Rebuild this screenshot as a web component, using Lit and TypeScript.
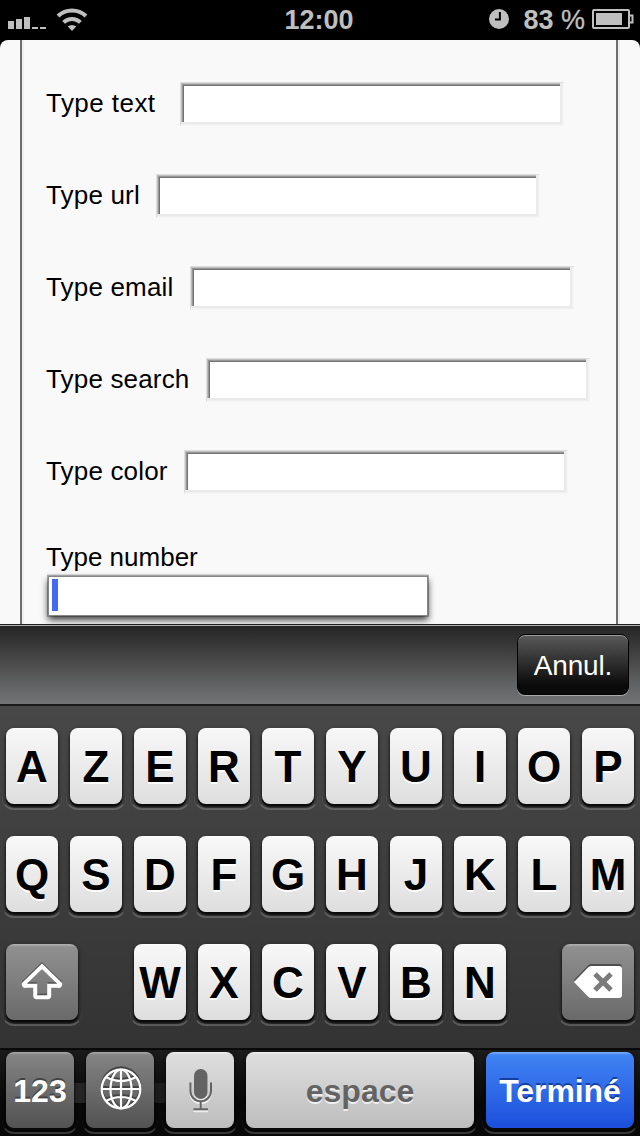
import { LitElement, html, css, svg } from "lit";
import { customElement, property } from "lit/decorators.js";

@customElement("status-bar")
class StatusBar extends LitElement {
  static styles = css`
    :host { display: grid; grid-template-columns: 1fr auto 1fr; align-items: center; height: 40px; background: #000; color: #bfbfbf; font: bold 27px/40px "Liberation Sans", sans-serif; }
    .left, .right { display: flex; align-items: center; height: 40px; }
    .time { padding-right: 2px; }
    .right { justify-content: flex-end; }
    svg { display: block; fill: currentColor; }
    .clock { margin-right: 14px; margin-bottom: 2px; }
    .pct { white-space: pre; margin-right: 7px; }
    .thin { font-weight: normal; -webkit-text-stroke: .3px currentColor; }
    .bat { margin-right: 6px; margin-bottom: 2px; }
  `;
  render() {
    return html`
      <div class="left">
        <svg width="100" height="40" viewBox="0 0 100 40">
          <path d="M8 21h6v8H8zM16 19h6v10h-6zM24 17h6v12h-6zM32 27h6v2h-6zM40 27h6v2h-6z"/>
          <path d="M72 31l-4.200-4.400a6.200 6.200 0 0 1 8.400 0z"/>
          <g fill="none" stroke="currentColor" stroke-width="4"><path d="M63.600 22.400a12.200 12.200 0 0 1 16.800 0"/><path d="M58 16a20.400 20.400 0 0 1 28 0"/></g>
        </svg>
      </div>
      <div class="time">12:00</div>
      <div class="right">
        <svg class="clock" width="20" height="20" viewBox="0 0 20 20"><circle cx="10" cy="10" r="10"/><path d="M10.900 3v7.500H6" fill="none" stroke="#000" stroke-width="2"/></svg>
        <div class="pct">83 <span class="thin">%</span></div>
        <svg class="bat" width="42" height="20" viewBox="0 0 42 20"><rect x="1" y="1" width="36" height="18" rx="1" fill="none" stroke="currentColor" stroke-width="2"/><path d="M4 4h26v12H4z"/><path d="M37 6.500h3.500v7H37" fill="none" stroke="currentColor" stroke-width="2"/></svg>
      </div>`;
  }
}

@customElement("web-form")
class WebForm extends LitElement {
  static styles = css`
    :host { display: block; height: 584px; background: #000; overflow: hidden; font: 26px/30px "Liberation Sans", sans-serif; color: #000; }
    .page { box-sizing: border-box; height: 584px; padding: 0 20px; background: #f9f9f9; border-radius: 8px 8px 0 0; }
    .col { box-sizing: border-box; width: 598px; height: 584px; border: solid #6e6e6e; border-width: 0 2px; box-shadow: inset 2px 0 #f0f0f0, 2px 0 #eee; padding: 42px 0 0 24px; display: flex; flex-direction: column; gap: 48px; }
    .row { display: flex; align-items: center; height: 44px; white-space: nowrap; letter-spacing: .17px; }
    .row:first-child { letter-spacing: .45px; }
    .label { padding-bottom: 2px; }
    .field { box-sizing: border-box; width: 384px; height: 44px; background: #fff; border: 1px solid; border-color: #dedede #f5f5f5 #f5f5f5 #dedede; box-shadow: inset -1px -1px #f1f1f1, inset -3px -3px #e9eaea, inset 1px 1px #bebebe, inset 2px 2px #989898, inset 3px 3px #737373; }
    .number { display: flex; flex-direction: column; }
    .focused { box-sizing: border-box; width: 380px; height: 40px; margin: 4px 0 0 2px; background: #fff; border: 1px solid #858585; box-shadow: 0 0 0 1px rgba(0,0,0,.22), 0 -1px 0 1px rgba(0,0,0,.1), 0 4px 7px rgba(0,0,0,.75); padding: 2px 3px; }
    .caret { width: 6px; height: 32px; background: #426bf2; }
  `;
  private fields = [["Type text", 180], ["Type url", 156], ["Type email", 190], ["Type search", 206], ["Type color", 184]] as const;
  render() {
    return html`<div class="page"><div class="col">
      ${this.fields.map(([label, x]) => html`<div class="row"><div class="label" style="width:${x - 46}px">${label}</div><div class="field"></div></div>`)}
      <div class="number"><div>Type number</div><div class="focused"><div class="caret"></div></div></div>
    </div></div>`;
  }
}

@customElement("key-cap")
class KeyCap extends LitElement {
  @property() kind = "letter";
  @property({ type: Number }) w = 52;
  static styles = css`
    :host { display: block; }
    .key { box-sizing: border-box; position: relative; height: 76px; border-radius: 8px; display: flex; align-items: center; justify-content: center; font: bold 44px/50px "Liberation Sans", sans-serif; padding-top: 2px; box-shadow: 0 2px 1px #0a0a0a, 0 3px 3px rgba(0,0,0,.75), 0 1px 4px 1px rgba(0,0,0,.2); }
    .key::after { content: ""; position: absolute; left: -4px; right: -4px; bottom: -6px; height: 12px; border-bottom: 2px solid rgba(255,255,255,.2); border-left: 1px solid rgba(255,255,255,.04); border-right: 1px solid rgba(255,255,255,.04); border-radius: 0 0 12px 12px; }
    .letter { color: #000; background: linear-gradient(rgba(255,255,255,.9), transparent 2px), linear-gradient(#f8f8f8, #dedede); text-shadow: 0 2px 0 #fff; }
    .dark { color: #fff; font-size: 32px; background: linear-gradient(rgba(255,255,255,.3), transparent 3px), linear-gradient(#919191, #6a6a6a); }
    .low { color: #fff; font-size: 32px; background: linear-gradient(rgba(255,255,255,.3), transparent 3px), linear-gradient(#858585, #525252); text-shadow: 0 -2px 0 #444; }
    .light { color: #636363; font-size: 32px; background: linear-gradient(rgba(255,255,255,.8), transparent 2px), linear-gradient(#dfdfdf, #bdbdbd); text-shadow: 0 2px 0 #eee; }
    .blue { color: #fff; font-size: 32px; letter-spacing: -.1px; background: linear-gradient(rgba(255,255,255,.35), transparent 3px), linear-gradient(#4185f4, #1c4fdc); text-shadow: 0 -2px 0 #153f9c; }
  `;
  render() {
    return html`<div class="key ${this.kind}" style="width:${this.w}px"><slot></slot></div>`;
  }
}

const arrow = "M22 3.200L39.400 20.200a1.400 1.400 0 0 1-1 2.600H29.200v10a1.400 1.400 0 0 1-1.400 1.400H16.600a1.400 1.400 0 0 1-1.400-1.400V22.800H5.600a1.400 1.400 0 0 1-1-2.600z";
const erase = "M0 16L14 1.500Q15.500 0 17 0H45a3 3 0 0 1 3 3V29a3 3 0 0 1-3 3H17Q15.500 32 14 30.500z";
const globe = svg`<circle cx="21" cy="21" r="19.300"/><ellipse cx="21" cy="21" rx="10.500" ry="19.300"/><path d="M21 1.700v38.600M1.700 21h38.600M6 9q15 8 30 0M6 33q15-8 30 0"/>`;
const mic = svg`<rect x="5" y="0" width="13.500" height="30" rx="6.700" stroke="none"/><path d="M1.400 13.500v8.500a10.300 10.300 0 0 0 20.600 0v-8.500M11.700 32.500v7M4.500 40.300h14.500" fill="none"/>`;

@customElement("soft-keyboard")
class SoftKeyboard extends LitElement {
  static styles = css`
    :host { display: block; }
    .tools { box-sizing: border-box; height: 82px; border-top: 1px solid #1c1d1e; border-bottom: 2px solid #191a1b; background: linear-gradient(#b5b5b5 1px, #252525 1px, #4c4c4c 50%, #606162 74%, #727476); display: flex; justify-content: flex-end; padding: 9px 11px 0 0; }
    .cancel { box-sizing: border-box; width: 112px; height: 61px; border: 1px solid #000; border-radius: 8px; background: linear-gradient(#5a5a5a, #303030 45%, #0a0a0a 85%); box-shadow: inset 0 1px 0 #999, 0 1px 0 #aaa; color: #fff; font: 28px/62px "Liberation Sans", sans-serif; letter-spacing: -.15px; text-align: center; }
    .keys { box-sizing: border-box; height: 342px; padding: 22px 6px 0; background: linear-gradient(#484848, #333); display: flex; flex-direction: column; gap: 32px; }
    .row { display: flex; gap: 12px; }
    .row.split { justify-content: space-between; }
    .group { display: flex; gap: 12px; }
    .bottom { box-sizing: border-box; height: 88px; padding: 2px 6px 0; border-top: 2px solid #0a0a0a; background: linear-gradient(#1b1b1b, #080808 60%); display: flex; gap: 12px; position: relative; }
    .bottom::before { content: ""; position: absolute; left: 74px; top: 33px; width: 92px; height: 20px; background: linear-gradient(90deg, #262626, #1c1c1c); }
    svg { display: block; fill: none; stroke: #fff; overflow: visible; margin-bottom: 2px; }
    .globe { margin-bottom: 4px; margin-left: 1px; }
    .mic { margin-left: 1px; }
  `;
  private letters(s: string) {
    return [...s].map((c) => html`<key-cap>${c}</key-cap>`);
  }
  render() {
    return html`
      <div class="tools"><div class="cancel">Annul.</div></div>
      <div class="keys">
        <div class="row">${this.letters("AZERTYUIOP")}</div>
        <div class="row">${this.letters("QSDFGHJKLM")}</div>
        <div class="row split">
          <key-cap kind="dark" .w=${72}><svg width="44" height="38" viewBox="0 0 44 38"><path d=${arrow} transform="translate(0 -2)" stroke="#505050" stroke-width="3"/><path d=${arrow} stroke-width="4"/></svg></key-cap>
          <div class="group">${this.letters("WXCVBN")}</div>
          <key-cap kind="dark" .w=${72}><svg width="48" height="32" viewBox="0 0 48 32"><path d=${erase} fill="#4e4e4e" transform="translate(0 -2)" stroke="none"/><path d=${erase} fill="#fff" stroke="none"/><path d="M21 8l16 16M37 8L21 24" stroke="#7b7b7b" stroke-width="5"/></svg></key-cap>
        </div>
      </div>
      <div class="bottom">
        <key-cap kind="low" .w=${68}>123</key-cap>
        <key-cap kind="low" .w=${68}><svg class="globe" width="42" height="42" viewBox="0 0 42 42"><g stroke="#444" stroke-width="2.200" transform="translate(0 -2)">${globe}</g><g stroke-width="2.200">${globe}</g></svg></key-cap>
        <key-cap kind="light" .w=${68}><svg class="mic" width="23" height="42" viewBox="0 0 23 42"><g fill="#eee" stroke="#eee" stroke-width="2" transform="translate(0 2)">${mic}</g><g fill="#636363" stroke="#636363" stroke-width="2">${mic}</g></svg></key-cap>
        <key-cap kind="light" .w=${228}>espace</key-cap>
        <key-cap kind="blue" .w=${148}>Terminé</key-cap>
      </div>`;
  }
}

@customElement("app-root")
class AppRoot extends LitElement {
  static styles = css`:host { display: block; width: 640px; height: 1136px; overflow: hidden; background: #000; }`;
  render() {
    return html`<status-bar></status-bar><web-form></web-form><soft-keyboard></soft-keyboard>`;
  }
}
